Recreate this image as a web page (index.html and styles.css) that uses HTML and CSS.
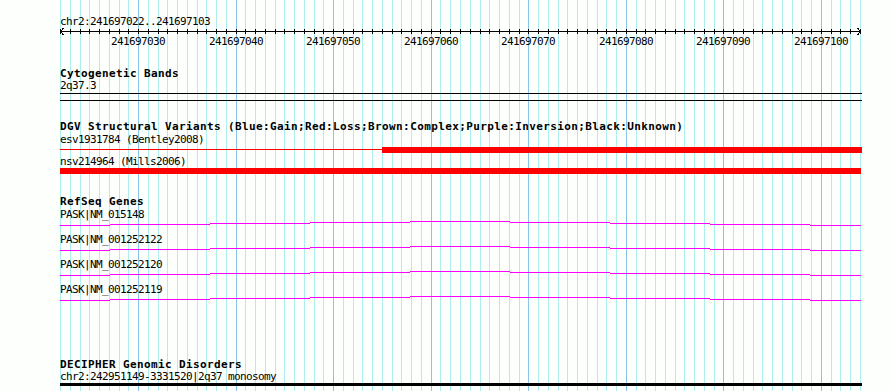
FILE: index.html
```html
<!DOCTYPE html>
<html lang="en">
<head>
<meta charset="utf-8">
<title>chr2:241697022..241697103</title>
<link rel="stylesheet" href="styles.css">
</head>
<body>
<div class="browser">
  <svg class="grid" width="890" height="391" viewBox="0 0 890 391" aria-hidden="true">
    <path class="grid-minor" d="M60.5 0V391M70.5 0V391M80.5 0V391M89.5 0V391M99.5 0V391M109.5 0V391M119.5 0V391M128.5 0V391M148.5 0V391M158.5 0V391M167.5 0V391M177.5 0V391M187.5 0V391M197.5 0V391M206.5 0V391M216.5 0V391M226.5 0V391M245.5 0V391M255.5 0V391M265.5 0V391M275.5 0V391M284.5 0V391M294.5 0V391M304.5 0V391M314.5 0V391M323.5 0V391M343.5 0V391M353.5 0V391M362.5 0V391M372.5 0V391M382.5 0V391M392.5 0V391M401.5 0V391M411.5 0V391M421.5 0V391M440.5 0V391M450.5 0V391M460.5 0V391M470.5 0V391M480.5 0V391M489.5 0V391M499.5 0V391M509.5 0V391M519.5 0V391M538.5 0V391M548.5 0V391M558.5 0V391M567.5 0V391M577.5 0V391M587.5 0V391M597.5 0V391M606.5 0V391M616.5 0V391M636.5 0V391M645.5 0V391M655.5 0V391M665.5 0V391M675.5 0V391M684.5 0V391M694.5 0V391M704.5 0V391M714.5 0V391M733.5 0V391M743.5 0V391M753.5 0V391M762.5 0V391M772.5 0V391M782.5 0V391M792.5 0V391M801.5 0V391M811.5 0V391M831.5 0V391M840.5 0V391M850.5 0V391M860.5 0V391"/>
    <path class="grid-major" d="M138.5 0V391M236.5 0V391M333.5 0V391M431.5 0V391M528.5 0V391M626.5 0V391M723.5 0V391M821.5 0V391"/>
  </svg>

  <div class="tracks">
    <svg class="ruler" width="802" height="68" viewBox="60 0 802 68">
      <text class="ruler-text" x="60" y="25">chr2:241697022..241697103</text>
      <path class="axis" d="M60 31.5H861"/>
      <path class="axis" d="M63.5 28L60.5 31.5L63.5 35M857.5 28L860.5 31.5L857.5 35"/>
      <path class="axis" d="M60.5 29v5M70.5 29v5M80.5 29v5M89.5 29v5M99.5 29v5M109.5 29v5M119.5 29v5M128.5 29v5M138.5 29v5M148.5 29v5M158.5 29v5M167.5 29v5M177.5 29v5M187.5 29v5M197.5 29v5M206.5 29v5M216.5 29v5M226.5 29v5M236.5 29v5M245.5 29v5M255.5 29v5M265.5 29v5M275.5 29v5M284.5 29v5M294.5 29v5M304.5 29v5M314.5 29v5M323.5 29v5M333.5 29v5M343.5 29v5M353.5 29v5M362.5 29v5M372.5 29v5M382.5 29v5M392.5 29v5M401.5 29v5M411.5 29v5M421.5 29v5M431.5 29v5M440.5 29v5M450.5 29v5M460.5 29v5M470.5 29v5M480.5 29v5M489.5 29v5M499.5 29v5M509.5 29v5M519.5 29v5M528.5 29v5M538.5 29v5M548.5 29v5M558.5 29v5M567.5 29v5M577.5 29v5M587.5 29v5M597.5 29v5M606.5 29v5M616.5 29v5M626.5 29v5M636.5 29v5M645.5 29v5M655.5 29v5M665.5 29v5M675.5 29v5M684.5 29v5M694.5 29v5M704.5 29v5M714.5 29v5M723.5 29v5M733.5 29v5M743.5 29v5M753.5 29v5M762.5 29v5M772.5 29v5M782.5 29v5M792.5 29v5M801.5 29v5M811.5 29v5M821.5 29v5M831.5 29v5M840.5 29v5M850.5 29v5M860.5 29v5"/>
      <text class="ruler-text" x="111" y="45">241697030</text>
      <text class="ruler-text" x="209" y="45">241697040</text>
      <text class="ruler-text" x="306" y="45">241697050</text>
      <text class="ruler-text" x="404" y="45">241697060</text>
      <text class="ruler-text" x="501" y="45">241697070</text>
      <text class="ruler-text" x="599" y="45">241697080</text>
      <text class="ruler-text" x="696" y="45">241697090</text>
      <text class="ruler-text" x="794" y="45">241697100</text>
    </svg>

    <section class="track track-cyto">
      <div class="track-title">Cytogenetic Bands</div>
      <div class="feat-label">2q37.3</div>
      <div class="band"></div>
    </section>

    <section class="track track-dgv">
      <div class="track-title">DGV Structural Variants (Blue:Gain;Red:Loss;Brown:Complex;Purple:Inversion;Black:Unknown)</div>
      <div class="feat-label">esv1931784 (Bentley2008)</div>
      <div class="sv-row">
        <div class="sv-line" style="width:322px"></div>
        <div class="sv-bar" style="width:480px"></div>
      </div>
      <div class="feat-label feat-label-gap">nsv214964 (Mills2006)</div>
      <div class="sv-row sv-row-tight">
        <div class="sv-bar" style="width:801px"></div>
      </div>
    </section>

    <section class="track track-refseq">
      <div class="track-title">RefSeq Genes</div>
      <div class="gene">
        <div class="feat-label">PASK|NM_015148</div>
        <div class="gene-line">
          <span class="seg" style="width:50px;margin-top:4px"></span><span class="seg" style="width:100px;margin-top:3px"></span><span class="seg" style="width:100px;margin-top:2px"></span><span class="seg" style="width:100px;margin-top:1px"></span><span class="seg" style="width:100px;margin-top:0px"></span><span class="seg" style="width:100px;margin-top:1px"></span><span class="seg" style="width:100px;margin-top:2px"></span><span class="seg" style="width:100px;margin-top:3px"></span><span class="seg" style="width:51px;margin-top:4px"></span>
        </div>
      </div>
      <div class="gene">
        <div class="feat-label">PASK|NM_001252122</div>
        <div class="gene-line">
          <span class="seg" style="width:50px;margin-top:4px"></span><span class="seg" style="width:100px;margin-top:3px"></span><span class="seg" style="width:100px;margin-top:2px"></span><span class="seg" style="width:100px;margin-top:1px"></span><span class="seg" style="width:100px;margin-top:0px"></span><span class="seg" style="width:100px;margin-top:1px"></span><span class="seg" style="width:100px;margin-top:2px"></span><span class="seg" style="width:100px;margin-top:3px"></span><span class="seg" style="width:51px;margin-top:4px"></span>
        </div>
      </div>
      <div class="gene">
        <div class="feat-label">PASK|NM_001252120</div>
        <div class="gene-line">
          <span class="seg" style="width:50px;margin-top:4px"></span><span class="seg" style="width:100px;margin-top:3px"></span><span class="seg" style="width:100px;margin-top:2px"></span><span class="seg" style="width:100px;margin-top:1px"></span><span class="seg" style="width:100px;margin-top:0px"></span><span class="seg" style="width:100px;margin-top:1px"></span><span class="seg" style="width:100px;margin-top:2px"></span><span class="seg" style="width:100px;margin-top:3px"></span><span class="seg" style="width:51px;margin-top:4px"></span>
        </div>
      </div>
      <div class="gene">
        <div class="feat-label">PASK|NM_001252119</div>
        <div class="gene-line">
          <span class="seg" style="width:50px;margin-top:4px"></span><span class="seg" style="width:100px;margin-top:3px"></span><span class="seg" style="width:100px;margin-top:2px"></span><span class="seg" style="width:100px;margin-top:1px"></span><span class="seg" style="width:100px;margin-top:0px"></span><span class="seg" style="width:100px;margin-top:1px"></span><span class="seg" style="width:100px;margin-top:2px"></span><span class="seg" style="width:100px;margin-top:3px"></span><span class="seg" style="width:51px;margin-top:4px"></span>
        </div>
      </div>
    </section>

    <section class="track track-decipher">
      <div class="track-title">DECIPHER Genomic Disorders</div>
      <div class="feat-label">chr2:242951149-3331520|2q37 monosomy</div>
      <div class="decipher-bar"></div>
    </section>
  </div>
</div>
</body>
</html>
```

FILE: styles.css
```css
html, body {
  margin: 0;
  padding: 0;
  background: #fcfffc;
}

.browser {
  position: relative;
  width: 890px;
  height: 391px;
  overflow: hidden;
  font-family: "DejaVu Sans Mono", "Liberation Mono", monospace;
  color: #000;
}

.grid {
  position: absolute;
  left: 0;
  top: 0;
  display: block;
}

.grid-minor {
  stroke: #afeeee;
  stroke-width: 1;
  fill: none;
  shape-rendering: crispEdges;
}

.grid-major {
  stroke: #87c6ec;
  stroke-width: 1;
  fill: none;
  shape-rendering: crispEdges;
}

.tracks {
  position: relative;
  width: 802px;
  padding-left: 60px;
}

.ruler {
  display: block;
}

.axis {
  stroke: #000;
  stroke-width: 1;
  fill: none;
  shape-rendering: crispEdges;
}

.ruler-text {
  font-size: 11px;
  letter-spacing: -0.62px;
  fill: #000;
}

.track-title {
  font-size: 11px;
  font-weight: bold;
  letter-spacing: 0.38px;
  line-height: 12px;
  white-space: nowrap;
}

.feat-label {
  font-size: 11px;
  letter-spacing: -0.62px;
  line-height: 12px;
  white-space: nowrap;
}

/* Cytogenetic bands */
.band {
  box-sizing: border-box;
  margin-top: 1px;
  width: 802px;
  height: 8px;
  border-top: 1px solid #000;
  border-bottom: 1px solid #000;
}

/* DGV */
.track-dgv {
  margin-top: 20px;
}

.track-dgv .track-title + .feat-label {
  margin-top: 1px;
}

.sv-row {
  display: flex;
  align-items: flex-start;
  height: 6px;
  margin-top: 1px;
}

.sv-row-tight {
  margin-top: 0;
}

.sv-line {
  height: 1px;
  margin-top: 2px;
  background: #ff0000;
}

.sv-bar {
  height: 6px;
  background: #ff0000;
}

.feat-label-gap {
  margin-top: 3px;
}

/* RefSeq */
.track-refseq {
  margin-top: 22px;
}

.track-refseq .track-title {
  margin-bottom: 1px;
}

.gene-line {
  display: flex;
  align-items: flex-start;
  height: 13px;
}

.seg {
  display: block;
  height: 0;
  border-top: 1px solid #ff00ff;
}

/* DECIPHER */
.track-decipher {
  margin-top: 50px;
}

.decipher-bar {
  width: 802px;
  height: 3px;
  background: #000;
}
```
